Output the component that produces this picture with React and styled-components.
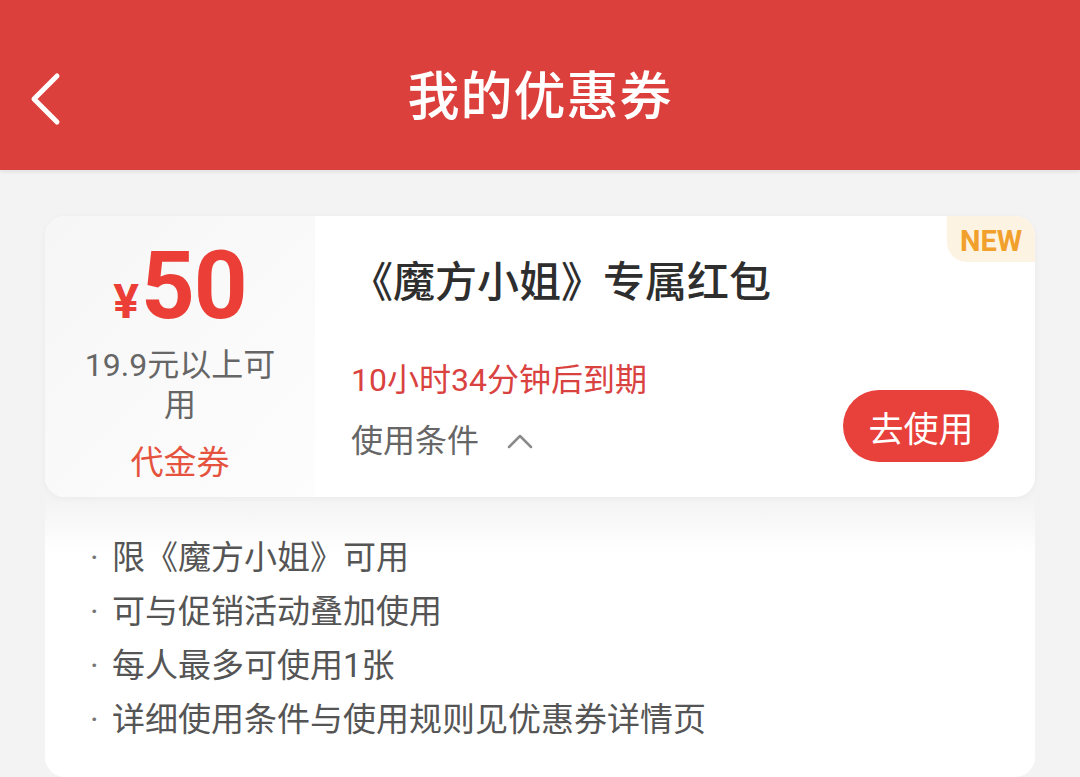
import React from 'react';
import styled, { createGlobalStyle } from 'styled-components';

const GlobalStyle = createGlobalStyle`
  html, body {
    margin: 0;
    padding: 0;
    background: #f3f3f3;
    overflow: hidden;
  }
  body {
    font-family: Roboto, "Noto Sans CJK SC", sans-serif;
  }
`;

const Page = styled.div`
  width: 1080px;
  height: 777px;
  background: #f3f3f3;
  overflow: hidden;
`;

const Header = styled.header`
  height: 170px;
  background: #dc403d;
  display: flex;
  align-items: center;
  justify-content: center;
  position: relative;
  box-shadow: 0 2px 4px rgba(0, 0, 0, 0.08);
`;

const BackButton = styled.div`
  position: absolute;
  left: 26px;
  top: 70px;
  width: 40px;
  height: 56px;
`;

const Title = styled.h1`
  margin: 14px 0 0;
  color: #fff;
  font-size: 52px;
  font-weight: 500;
  letter-spacing: 1px;
`;

const Card = styled.section`
  margin: 46px 45px 0;
  height: 281px;
  display: flex;
  background: #fff;
  border-radius: 20px;
  overflow: hidden;
  position: relative;
  box-shadow: 0 1px 6px rgba(0, 0, 0, 0.04);
`;

const LeftCol = styled.div`
  width: 270px;
  flex-shrink: 0;
  background: linear-gradient(135deg, #f6f6f6, #fdfdfd);
  display: flex;
  flex-direction: column;
  align-items: center;
  padding-top: 23px;
  box-sizing: border-box;
`;

const Amount = styled.div`
  display: flex;
  align-items: baseline;
  color: #ea3e36;
  font-weight: 700;
  line-height: 1;
`;

const Yen = styled.span`
  font-size: 48px;
  margin-right: 2px;
`;

const Value = styled.span`
  font-size: 94px;
  letter-spacing: -1px;
`;

const Threshold = styled.div`
  width: 200px;
  margin-top: 12px;
  text-align: center;
  font-size: 32px;
  line-height: 40px;
  color: #666;
`;

const Kind = styled.div`
  margin-top: 18px;
  font-size: 33px;
  line-height: 40px;
  color: #e5533f;
`;

const RightCol = styled.div`
  flex: 1;
  display: flex;
  flex-direction: column;
  padding: 39px 0 0 36px;
  position: relative;
`;

const CouponName = styled.h2`
  margin: 0;
  font-size: 42px;
  font-weight: 500;
  line-height: 56px;
  color: #2e2e2e;
`;

const Expiry = styled.div`
  margin-top: 49px;
  font-size: 32px;
  line-height: 40px;
  color: #d9423f;
`;

const Conditions = styled.div`
  margin-top: 21px;
  display: flex;
  align-items: center;
  gap: 28px;
  font-size: 32px;
  line-height: 40px;
  color: #666;
`;

const UseButton = styled.button`
  position: absolute;
  right: 36px;
  top: 174px;
  width: 156px;
  height: 72px;
  border: none;
  border-radius: 36px;
  background: #e8403a;
  color: #fff;
  font-family: inherit;
  font-size: 35px;
  padding: 0;
`;

const NewBadge = styled.div`
  position: absolute;
  right: 0;
  top: 0;
  width: 88px;
  height: 46px;
  padding-top: 3px;
  box-sizing: border-box;
  background: #fdf3e2;
  border-bottom-left-radius: 20px;
  color: #f2a02c;
  font-weight: 700;
  font-size: 29px;
  display: flex;
  align-items: center;
  justify-content: center;
`;

const Details = styled.ul`
  margin: 0 45px;
  padding: 34px 0 30px 45px;
  list-style: none;
  background: linear-gradient(#f3f3f3, #ffffff 56px);
  border-radius: 0 0 20px 20px;
`;

const DetailItem = styled.li`
  font-size: 33px;
  line-height: 54px;
  color: #555;
  display: flex;

  &::before {
    content: '·';
    width: 22px;
    color: #777;
  }
`;

const rules = [
  '限《魔方小姐》可用',
  '可与促销活动叠加使用',
  '每人最多可使用1张',
  '详细使用条件与使用规则见优惠券详情页',
];

export default function App() {
  return (
    <Page>
      <GlobalStyle />
      <Header>
        <BackButton>
          <svg width="40" height="56" viewBox="0 0 40 56">
            <polyline points="31,6 8,29 31,52" fill="none" stroke="#fff" strokeWidth="5" strokeLinecap="round" strokeLinejoin="round" />
          </svg>
        </BackButton>
        <Title>我的优惠券</Title>
      </Header>

      <Card>
        <LeftCol>
          <Amount>
            <Yen>¥</Yen>
            <Value>50</Value>
          </Amount>
          <Threshold>19.9元以上可用</Threshold>
          <Kind>代金券</Kind>
        </LeftCol>
        <RightCol>
          <CouponName>《魔方小姐》专属红包</CouponName>
          <Expiry>10小时34分钟后到期</Expiry>
          <Conditions>
            使用条件
            <svg width="26" height="16" viewBox="0 0 26 16">
              <polyline points="2,14 13,3 24,14" fill="none" stroke="#8a8a8a" strokeWidth="2.5" strokeLinecap="round" strokeLinejoin="round" />
            </svg>
          </Conditions>
          <UseButton>去使用</UseButton>
        </RightCol>
        <NewBadge>NEW</NewBadge>
      </Card>

      <Details>
        {rules.map((r) => (
          <DetailItem key={r}>{r}</DetailItem>
        ))}
      </Details>
    </Page>
  );
}
